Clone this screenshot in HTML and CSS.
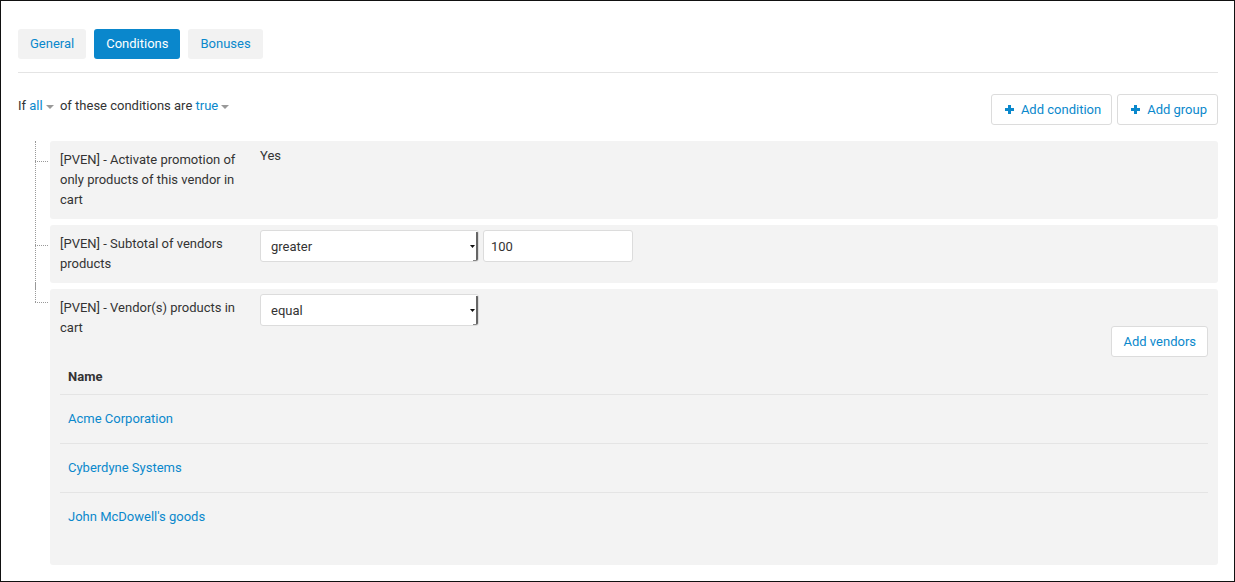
FILE: index.html
```html
<!DOCTYPE html>
<html lang="en">
<head>
    <meta charset="UTF-8">
    <meta name="viewport" content="width=device-width, initial-scale=1.0">
    <title>Promotion conditions</title>
    <link rel="stylesheet" href="styles.css">
</head>
<body>
    <div class="page">
        <!-- Tabs -->
        <div class="tabs">
            <a class="tab" href="#">General</a>
            <a class="tab active" href="#">Conditions</a>
            <a class="tab" href="#">Bonuses</a>
        </div>

        <div class="cond-header">
            <div class="cond-rule">
                If <a href="#">all</a><span class="caret"></span> of these conditions are <a class="rule-true" href="#">true</a><span class="caret"></span>
            </div>
            <div class="cond-actions">
                <button class="btn btn-icon"><svg class="plus" viewBox="0 0 9 9" width="9" height="9"><path d="M3 0h3v3h3v3H6v3H3V6H0V3h3z"/></svg>Add condition</button>
                <button class="btn btn-icon"><svg class="plus" viewBox="0 0 9 9" width="9" height="9"><path d="M3 0h3v3h3v3H6v3H3V6H0V3h3z"/></svg>Add group</button>
            </div>
        </div>

        <div class="tree">
            <div class="cond">
                <div class="cond-label">[PVEN] - Activate promotion of only products of this vendor in cart</div>
                <div class="cond-value">Yes</div>
            </div>
            <div class="cond">
                <div class="cond-label">[PVEN] - Subtotal of vendors products</div>
                <div class="cond-value">
                    <select class="field select"><option>greater</option></select>
                    <input class="field input" type="text" value="100">
                </div>
            </div>
            <div class="cond cond-last">
                <div class="cond-label">[PVEN] - Vendor(s) products in cart</div>
                <div class="cond-value">
                    <select class="field select"><option>equal</option></select>
                </div>
                <div class="cond-tools">
                    <button class="btn">Add vendors</button>
                </div>
                <table class="vendors">
                    <thead>
                        <tr><th>Name</th></tr>
                    </thead>
                    <tbody>
                        <tr><td><a href="#">Acme Corporation</a></td></tr>
                        <tr><td><a href="#">Cyberdyne Systems</a></td></tr>
                        <tr><td><a href="#">John McDowell's goods</a></td></tr>
                    </tbody>
                </table>
            </div>
        </div>
    </div>
</body>
</html>
```

FILE: styles.css
```css
body {
    margin: 0;
    padding: 0;
    font-family: Roboto, "Liberation Sans", Arial, sans-serif;
    font-size: 13px;
    color: #333;
    background-color: #fff;
}
a {
    color: #0a88cc;
    text-decoration: none;
}
.page {
    width: 1235px;
    height: 582px;
    box-sizing: border-box;
    border: 1px solid #111;
    padding: 28px 16px 0 17px;
    overflow: hidden;
}

/* tabs */
.tabs {
    display: flex;
    gap: 8px;
    padding-bottom: 13px;
    border-bottom: 1px solid #e4e4e4;
}
.tab {
    display: block;
    height: 30px;
    line-height: 30px;
    padding: 0 12px;
    border-radius: 3px;
    background-color: #f2f2f2;
    color: #0a88cc;
}
.tab.active {
    background-color: #0a87cc;
    color: #fff;
}

/* header */
.cond-header {
    display: flex;
    justify-content: space-between;
    align-items: flex-start;
    margin-top: 21px;
}
.cond-rule {
    line-height: 20px;
    margin-top: 2px;
}
.caret {
    display: inline-block;
    width: 0;
    height: 0;
    margin: 0 3px 0 3px;
    vertical-align: middle;
    border-left: 4px solid transparent;
    border-right: 4px solid transparent;
    border-top: 4px solid #999;
}
.rule-true {
    margin-left: 0;
}
.cond-actions {
    display: flex;
    gap: 5px;
}
.btn {
    display: inline-flex;
    align-items: center;
    height: 31px;
    padding: 0 11px;
    font-family: inherit;
    font-size: 13px;
    color: #0a88cc;
    background-color: #fff;
    border: 1px solid #dcdcdc;
    border-radius: 3px;
}
.btn-icon {
    padding: 0 10px;
}
.plus {
    fill: #0a88cc;
    margin-right: 7px;
    margin-left: 3px;
}

/* condition tree */
.tree {
    margin-top: 16px;
    padding-left: 32px;
}
.cond {
    position: relative;
    display: grid;
    grid-template-columns: 186px 1fr;
    column-gap: 14px;
    align-items: start;
    padding: 4px 10px 9px;
    margin-bottom: 6px;
    background-color: #f3f3f3;
    border-radius: 3px;
}
.cond::before {
    content: "";
    position: absolute;
    left: -15px;
    top: -7px;
    bottom: -6px;
    border-left: 1px dotted #999;
}
.cond::after {
    content: "";
    position: absolute;
    left: -15px;
    top: 20px;
    width: 13px;
    border-top: 1px dotted #999;
}
.cond:first-child::before {
    top: 0;
}
.cond-last::before {
    bottom: auto;
    height: 20px;
}
.cond-last::after {
    top: 13px;
}
.cond-label {
    padding-top: 5px;
    line-height: 20px;
    grid-row: span 2;
}
.cond-last .cond-label {
    grid-row: 1 / span 2;
}
.cond-value {
    display: flex;
    gap: 4px;
    line-height: 20px;
    padding-top: 1px;
}
.field {
    box-sizing: border-box;
    height: 32px;
    font-family: inherit;
    font-size: 13px;
    color: #333;
    background-color: #fff;
    border: 1px solid #dcdcdc;
    border-radius: 3px;
}
.select {
    width: 219px;
    padding: 0 10px;
    -webkit-appearance: none;
    appearance: none;
    background-image: url("data:image/svg+xml,%3Csvg xmlns='http://www.w3.org/2000/svg' width='10' height='32'%3E%3Cpath d='M1 15h5l-2.5 3z' fill='%23111'/%3E%3Crect x='7' y='2' width='2' height='29' fill='%23666'/%3E%3Crect x='4' y='30' width='5' height='1' fill='%23888'/%3E%3C/svg%3E");
    background-repeat: no-repeat;
    background-position: right -1px center;
}
.input {
    width: 150px;
    padding: 0 7px;
}
.cond-tools {
    grid-column: 2;
    display: flex;
    justify-content: flex-end;
}

/* vendors table */
.vendors {
    grid-column: 1 / span 2;
    width: 100%;
    border-collapse: collapse;
    margin-bottom: 15px;
}
.vendors th {
    text-align: left;
    font-weight: bold;
    padding: 10px 8px 7px;
    line-height: 20px;
    border-bottom: 1px solid #e4e4e4;
}
.vendors td {
    padding: 14px 8px;
    line-height: 20px;
    border-bottom: 1px solid #e4e4e4;
}
.vendors tr:last-child td {
    border-bottom: 0;
}
```
